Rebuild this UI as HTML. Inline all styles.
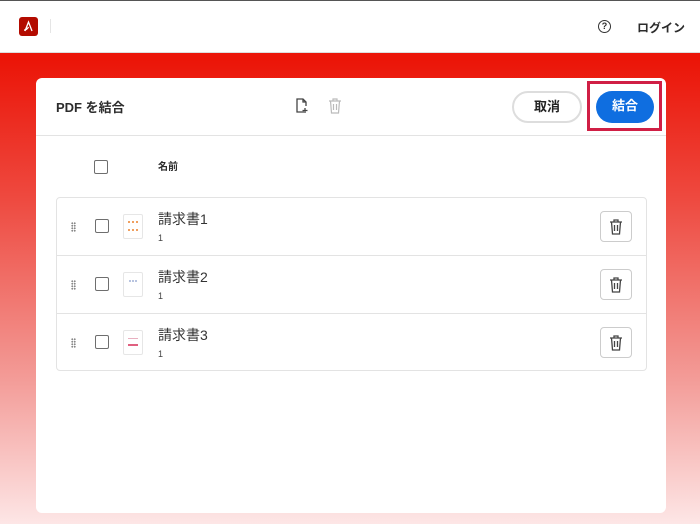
<!DOCTYPE html>
<html><head><meta charset="utf-8"><style>
*{margin:0;padding:0;box-sizing:border-box}
body{width:700px;height:524px;overflow:hidden;font-family:"Liberation Sans","Noto Sans CJK JP",sans-serif;background:linear-gradient(180deg,#eb1508 0px,#eb1508 60px,#ee4a40 200px,#f39c98 380px,#fde6e6 524px);position:relative;color:#2c2c2c}
.top{position:absolute;left:0;top:0;width:700px;height:53px;background:#fff;border-top:1px solid #555;border-bottom:1px solid #ddd}
.logo{position:absolute;left:19px;top:16px;width:19px;height:19px;background:#b30b00;border-radius:3px}
.sep{position:absolute;left:50px;top:18px;width:1px;height:14px;background:#e5e5e5}
.help{position:absolute;left:598px;top:19px;width:13px;height:13px;border:1.5px solid #333;border-radius:50%;font-size:9px;font-weight:bold;text-align:center;line-height:10px}
.login{position:absolute;left:637px;top:18px;font-size:12px;font-weight:bold}
.card{position:absolute;left:36px;top:78px;width:630px;height:435px;background:#fff;border-radius:6px}
.hdr{position:absolute;left:0;top:0;width:630px;height:58px;border-bottom:1px solid #e3e3e3}
.title{position:absolute;left:20px;top:19px;font-size:13px;font-weight:bold}
.btn{position:absolute;top:13px;height:32px;border-radius:16px;font-size:13px;font-weight:bold;text-align:center;line-height:28px}
.cancel{left:476px;width:70px;border:2px solid #ddd;color:#222}
.ok{left:560px;width:58px;background:#0f6ee0;color:#fff;line-height:30px}
.hl{position:absolute;left:551px;top:3px;width:75px;height:50px;border:3px solid #d01f45}
.cb{position:absolute;width:14px;height:14px;border:1.5px solid #6e6e6e;border-radius:2px}
.list{position:absolute;left:20px;top:119px;width:591px;height:174px;border:1px solid #e3e3e3;border-radius:4px}
.row{position:absolute;left:0;width:589px;height:58px;border-bottom:1px solid #e3e3e3}
.grip{position:absolute;left:14px;top:24px;width:5px;height:10px;background-image:radial-gradient(circle,#888 0.9px,transparent 1.1px);background-size:2.5px 2.5px}
.thumb{position:absolute;left:66px;top:16px;width:20px;height:25px;border:1px solid #e6e6e6;border-radius:2px}
.name{position:absolute;left:101px;top:11px;font-size:14px;color:#333}
.pg{position:absolute;left:101px;top:35px;font-size:9px;color:#444}
.del{position:absolute;left:543px;top:13px;width:32px;height:31px;border:1px solid #ccc;border-radius:4px}
</style></head><body>
<div class="top"><div class="logo"><svg width="19" height="19" viewBox="0 0 19 19"><path d="M6 14 L9.5 5 L13 14 M9.5 10 Q8 13 5 13" stroke="#fff" stroke-width="1.3" fill="none"/></svg></div><div class="sep"></div><div class="help">?</div><div class="login">ログイン</div></div>
<div class="card">
<div class="hdr"><div class="title">PDF を結合</div>
<svg style="position:absolute;left:259px;top:20px" width="14" height="16" viewBox="0 0 14 16"><path d="M9 14H2V1h6l3 3v4M8 1v3h3M10 10v5M7.5 12.5h5" stroke="#444" stroke-width="1.3" fill="none"/></svg>
<svg style="position:absolute;left:292px;top:20px" width="14" height="16" viewBox="0 0 14 16"><path d="M1 3h12M5 3V1h4v2M2.5 3l1 12h7l1-12M5.5 6v6M8.5 6v6" stroke="#bbb" stroke-width="1.2" fill="none"/></svg>
<div class="btn cancel">取消</div><div class="btn ok">結合</div><div class="hl"></div></div>
<div class="cb" style="left:58px;top:82px"></div>
<div style="position:absolute;left:122px;top:80px;font-size:10px;font-weight:bold">名前</div>
<div class="list">
<div class="row" style="top:0"><div class="grip"></div><div class="cb" style="left:38px;top:21px"></div><div class="thumb"><div style="margin:6px 4px;height:10px;border-top:2px dotted #f0a060;border-bottom:2px dotted #f0a060"></div></div><div class="name">請求書1</div><div class="pg">1</div><div class="del"><svg style="margin:7px 8px" width="14" height="16" viewBox="0 0 14 16"><path d="M1 3h12M5 3V1h4v2M2.5 3l1 12h7l1-12M5.5 6v6M8.5 6v6" stroke="#444" stroke-width="1.3" fill="none"/></svg></div></div>
<div class="row" style="top:58px"><div class="grip"></div><div class="cb" style="left:38px;top:21px"></div><div class="thumb"><div style="margin:7px 5px;height:8px;border-top:2px dotted #b8c4e0"></div></div><div class="name">請求書2</div><div class="pg">1</div><div class="del"><svg style="margin:7px 8px" width="14" height="16" viewBox="0 0 14 16"><path d="M1 3h12M5 3V1h4v2M2.5 3l1 12h7l1-12M5.5 6v6M8.5 6v6" stroke="#444" stroke-width="1.3" fill="none"/></svg></div></div>
<div class="row" style="top:116px;border-bottom:none"><div class="grip"></div><div class="cb" style="left:38px;top:21px"></div><div class="thumb"><div style="margin:7px 4px;height:8px;border-top:1px solid #e8b0c0;border-bottom:2px solid #e06080"></div></div><div class="name">請求書3</div><div class="pg">1</div><div class="del"><svg style="margin:7px 8px" width="14" height="16" viewBox="0 0 14 16"><path d="M1 3h12M5 3V1h4v2M2.5 3l1 12h7l1-12M5.5 6v6M8.5 6v6" stroke="#444" stroke-width="1.3" fill="none"/></svg></div></div>
</div>
</div>
</body></html>
